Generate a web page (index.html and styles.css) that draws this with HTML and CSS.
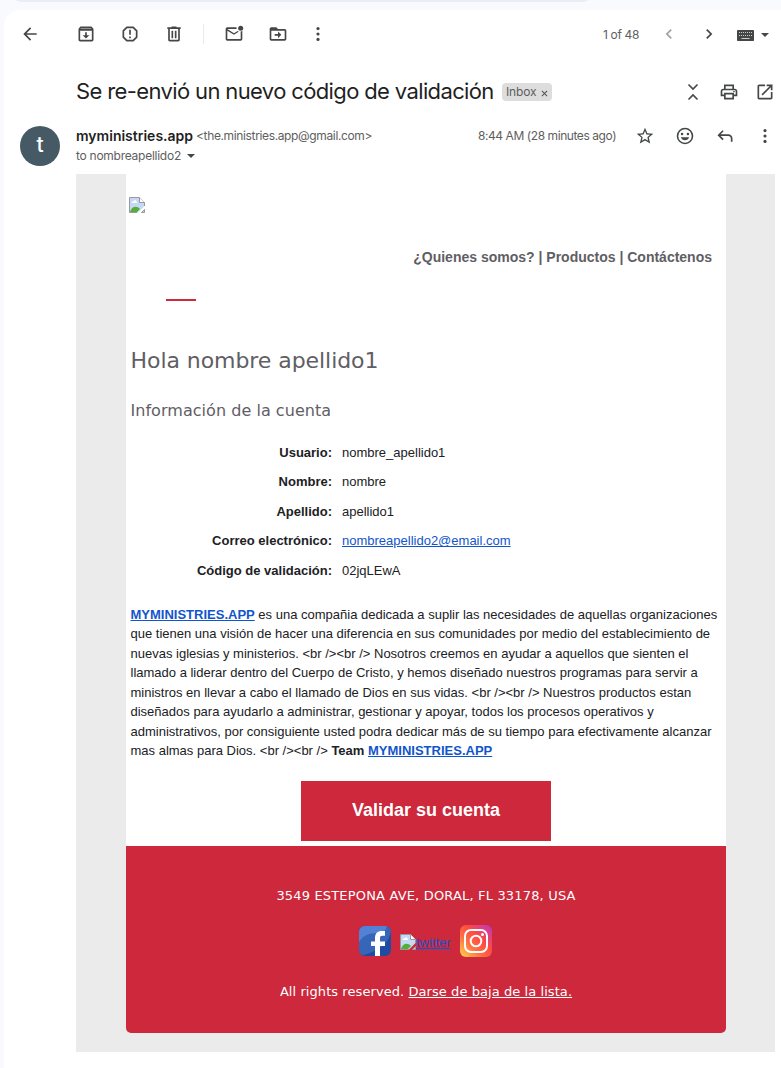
FILE: index.html
```
<!DOCTYPE html>
<html lang="es">
<head>
<meta charset="utf-8">
<title>Se re-envió un nuevo código de validación</title>
<link rel="stylesheet" href="styles.css">
</head>
<body>
<svg width="0" height="0" class="defs">
  <defs>
    <symbol id="more" viewBox="0 0 24 24"><circle cx="12" cy="5.5" r="1.9"/><circle cx="12" cy="12" r="1.9"/><circle cx="12" cy="18.5" r="1.9"/></symbol>
    <symbol id="broken" viewBox="0 0 16 16">
      <path d="M.5.5h10l5 5V9L9 15.500H.5z" fill="#c6d8f5"/>
      <path d="M1 15c1.500-5.500 6.500-7 10-3l-3 3z" fill="#54ae3a"/>
      <path d="M15.500 9V5.500l-5-5H.5v15H8" fill="none" stroke="#999"/>
      <path d="M10.500.5v5h5" fill="#fff" stroke="#999"/>
      <path d="M3 6c-.9-1.600 1-2.300 1.500-1.500C5 2.600 7.500 3 7.300 4.600 8.400 4.700 8.300 6 7.500 6z" fill="#fff"/>
      <path d="M12.500 15.500L15.500 12.500v3z" fill="#c6d8f5" stroke="#999"/>
    </symbol>
  </defs>
</svg>
<div class="search"></div>
<main class="card">
  <div class="toolbar">
    <svg class="ic" viewBox="0 0 24 24"><path d="M20 11H7.800l5.600-5.600L12 4l-8 8 8 8 1.400-1.400L7.800 13H20z"/></svg>
    <svg class="ic g36" viewBox="0 0 24 24"><path d="M20.500 5.200l-1.400-1.700C18.900 3.200 18.500 3 18 3H6c-.5 0-.9.2-1.200.5L3.500 5.200C3.200 5.600 3 6 3 6.500V19c0 1.100.9 2 2 2h14c1.100 0 2-.9 2-2V6.500c0-.5-.2-.9-.5-1.300zM19 19H5V8h14z"/><path d="M6 5h12l.8 1H5.200z" fill="#aaa"/><path d="M11 10h2v3.500h3L12 17.500 8 13.500h3z"/></svg>
    <svg class="ic g24" viewBox="0 0 24 24"><path d="M11 15h2v2h-2zm0-8h2v6h-2z"/><path d="M8.200 4h7.600L20 8.200v7.600L15.800 20H8.200L4 15.800V8.200z" fill="none" stroke="#444746" stroke-width="2" stroke-linejoin="round"/></svg>
    <svg class="ic g24" viewBox="0 0 24 24"><path d="M15 4V3H9v1H4v2h1v13c0 1.100.9 2 2 2h10c1.100 0 2-.9 2-2V6h1V4zm2 15H7V6h10zM9 8h2v9H9zm4 0h2v9h-2z"/></svg>
    <span class="divider"></span>
    <svg class="ic" viewBox="0 0 24 24"><path d="M22 9v9c0 1.100-.9 2-2 2H4c-1.100 0-2-.9-2-2V6c0-1.100.9-2 2-2h11.100a5 5 0 0 0 0 2H4l8 5 4.400-2.700c.5.400 1 .6 1.700.8L12 13 4 8v10h16V9c.8-.2 1.400-.5 2-1z"/><circle cx="20" cy="5" r="3"/></svg>
    <svg class="ic g24" viewBox="0 0 24 24"><path d="M20 6h-8l-2-2H4c-1.100 0-2 .9-2 2v12c0 1.100.9 2 2 2h16c1.100 0 2-.9 2-2V8c0-1.100-.9-2-2-2zm0 12H4V8h16zm-8-1l4-4-4-4v3H8v2h4z"/></svg>
    <svg class="ic g20"><use href="#more"/></svg>
    <span class="count">1 of 48</span>
    <svg class="ic prev" viewBox="0 0 24 24"><path d="M15.400 7.400L14 6l-6 6 6 6 1.400-1.400L10.800 12z"/></svg>
    <svg class="ic next" viewBox="0 0 24 24"><path d="M8.600 7.400L10 6l6 6-6 6-1.400-1.400 4.600-4.600z"/></svg>
    <svg class="keyboard" viewBox="0 0 17 11"><rect width="17" height="11" rx=".7" fill="#444746"/><path d="M2 2.500h13M2 5.500h13" stroke="#ccc" stroke-dasharray="1 1"/><path d="M4.500 8.500h8" stroke="#ccc"/></svg>
    <svg class="caret" viewBox="0 0 8 4"><path d="M0 0h8L4 4z"/></svg>
  </div>

  <header class="subject">
    <h1>Se re-envió un nuevo código de validación</h1>
    <span class="label"><span class="inbox">Inbox</span><svg viewBox="0 0 8 8"><path d="M1 1l6 6M7 1L1 7" stroke="#555" stroke-width="1.200"/></svg></span>
    <svg class="ic collapse" viewBox="0 0 20 20"><path d="M5.500 2.500L10 7l4.500-4.500M5.500 17.500L10 13l4.500 4.500" fill="none" stroke="#444746" stroke-width="1.600"/></svg>
    <svg class="ic print" viewBox="0 0 24 24"><path d="M19 8h-1V3H6v5H5c-1.700 0-3 1.300-3 3v6h4v4h12v-4h4v-6c0-1.700-1.300-3-3-3zM8 5h8v3H8zm8 14H8v-4h8zm2-4v-2H6v2H4v-4c0-.6.400-1 1-1h14c.6 0 1 .4 1 1v4z"/><circle cx="18" cy="11.500" r="1"/></svg>
    <svg class="ic open" viewBox="0 0 24 24"><path d="M19 19H5V5h7V3H5c-1.100 0-2 .9-2 2v14c0 1.100.9 2 2 2h14c1.100 0 2-.9 2-2v-7h-2zM14 3v2h3.600l-9.800 9.800 1.400 1.400L19 6.400V10h2V3z"/></svg>
  </header>

  <section class="sender">
    <div class="avatar">t</div>
    <div class="who">
      <div class="from"><b>myministries.app</b><span class="email">&lt;the.ministries.app@gmail.com&gt;</span></div>
      <div class="to"><span>to nombreapellido2</span><svg class="caret" viewBox="0 0 8 4"><path d="M0 0h8L4 4z"/></svg></div>
    </div>
    <div class="meta">
      <span class="time">8:44 AM (28 minutes ago)</span>
      <svg class="ic star" viewBox="0 0 24 24"><path d="M22 9.200l-7.200-.6L12 2 9.200 8.600 2 9.200l5.500 4.700L5.800 21l6.200-3.700 6.200 3.700-1.600-7.100zm-10 6.200l-3.800 2.300 1-4.300-3.300-2.900 4.400-.4L12 6.100l1.700 4 4.400.4-3.300 2.900 1 4.300z"/></svg>
      <svg class="ic smile" viewBox="0 0 24 24"><circle cx="12" cy="12" r="9" fill="none" stroke="#444746" stroke-width="1.900"/><circle cx="8.500" cy="9.500" r="1.500"/><circle cx="15.500" cy="9.500" r="1.500"/><path d="M7 13.500h10c-.8 2.300-2.600 3.700-5 3.700s-4.200-1.400-5-3.700z"/></svg>
      <svg class="ic reply" viewBox="0 0 24 24"><path d="M9 5l1.400 1.400L6.800 10H16c2.800 0 5 2.200 5 5v4h-2v-4c0-1.700-1.300-3-3-3H6.800l3.600 3.600L9 17l-6-6z"/></svg>
      <svg class="ic dots"><use href="#more"/></svg>
    </div>
  </section>

  <div class="message">
    <article class="mail">
      <svg class="logo"><use href="#broken"/></svg>
      <nav class="links"><span>¿Quienes somos? | Productos | Contáctenos</span></nav>
      <hr class="dash">
      <h2><span>Hola nombre apellido1</span></h2>
      <h3><span>Información de la cuenta</span></h3>
      <dl>
        <dt>Usuario:</dt><dd>nombre_apellido1</dd>
        <dt>Nombre:</dt><dd>nombre</dd>
        <dt>Apellido:</dt><dd>apellido1</dd>
        <dt>Correo electrónico:</dt><dd><a href="#">nombreapellido2@email.com</a></dd>
        <dt>Código de validación:</dt><dd>02jqLEwA</dd>
      </dl>
      <p class="about"><a href="#"><b>MYMINISTRIES.APP</b></a> es una compañia dedicada a suplir las necesidades de aquellas organizaciones<br>
        que tienen una visión de hacer una diferencia en sus comunidades por medio del establecimiento de<br>
        nuevas iglesias y ministerios. &lt;br /&gt;&lt;br /&gt; Nosotros creemos en ayudar a aquellos que sienten el<br>
        llamado a liderar dentro del Cuerpo de Cristo, y hemos diseñado nuestros programas para servir a<br>
        ministros en llevar a cabo el llamado de Dios en sus vidas. &lt;br /&gt;&lt;br /&gt; Nuestros productos estan<br>
        diseñados para ayudarlo a administrar, gestionar y apoyar, todos los procesos operativos y<br>
        administrativos, por consiguiente usted podra dedicar más de su tiempo para efectivamente alcanzar<br>
        mas almas para Dios. &lt;br /&gt;&lt;br /&gt; <b>Team <a href="#">MYMINISTRIES.APP</a></b></p>
      <a class="button" href="#">Validar su cuenta</a>
      <footer>
        <div class="address">3549 ESTEPONA AVE, DORAL, FL 33178, USA</div>
        <div class="social">
          <svg class="fb" viewBox="0 0 32 30">
            <defs><clipPath id="fbclip"><rect width="32" height="30" rx="6"/></clipPath></defs>
            <g clip-path="url(#fbclip)"><rect width="32" height="30" fill="#1f4ba0"/><path d="M0 0h32v4C31 16 20 26 0 30z" fill="#3766b8"/><path d="M0 0h28C27 5 23 7 18 7 9 7 4 10 0 16z" fill="#5282d6"/>
            <path d="M16 30V20h-4v-4.500h4V12c0-4.500 2.500-7 7-7h3v4.700h-2.500c-2 0-2.500.8-2.500 2.500v3.300h5V20h-5v10z" fill="#fff"/></g>
          </svg>
          <a class="twitter" href="#"><svg><use href="#broken"/></svg><span>twitter</span></a>
          <svg class="ig" viewBox="0 0 32 32">
            <defs><linearGradient id="iggrad" x1="0" y1="1" x2="1" y2="0"><stop offset="0" stop-color="#ffd84c"/><stop offset=".35" stop-color="#ff7043"/><stop offset=".6" stop-color="#ff4a42"/><stop offset="1" stop-color="#b936c4"/></linearGradient></defs>
            <rect width="32" height="32" rx="6" fill="url(#iggrad)"/>
            <g fill="none" stroke="#fff" stroke-width="2"><rect x="5" y="5" width="22" height="22" rx="6"/><circle cx="16" cy="16" r="5.300"/></g><circle cx="22.500" cy="9.500" r="1.500" fill="#fff"/>
          </svg>
        </div>
        <div class="rights">All rights reserved. <a href="#">Darse de baja de la lista.</a></div>
      </footer>
    </article>
  </div>
</main>
</body>
</html>
```
FILE: styles.css
```
* { box-sizing: border-box; }
body { margin: 0; background: #f8fafd; font-family: "Liberation Sans", Arial, sans-serif; color: #202124; width: 781px; height: 1068px; overflow: hidden; }
svg { display: block; flex: none; }
.defs { position: absolute; }
.search { width: 572px; height: 2px; margin-left: 16px; background: #e9eef6; border-radius: 0 0 10px 10px / 0 0 2px 2px; }
.card { margin: 8px 0 0 4px; height: 1058px; background: #fff; border-radius: 16px 0 0 0; }
.ic { width: 20px; height: 20px; fill: #444746; }
.caret { width: 8px; height: 4px; fill: #444746; }
.toolbar { display: flex; align-items: center; height: 48px; padding-left: 16px; }
.g36 { margin-left: 36px; }
.g24 { margin-left: 24px; }
.g20 { margin-left: 20px; }
.divider { width: 1px; height: 20px; background: #e8eaed; margin: 0 20px 0 19px; }
.count { width: 40px; margin: 2px 0 0 275px; font: 12px/18px Inter, sans-serif; letter-spacing: -.35px; color: #5e5e5e; white-space: nowrap; }
.prev { margin-left: 16px; opacity: .5; }
.next { margin-left: 20px; }
.keyboard { width: 17px; height: 11px; margin: 2px 0 0 18px; }
.toolbar .caret { margin-left: 7px; margin-top: 1px; }

.subject { display: flex; align-items: center; height: 36px; margin-top: 16px; padding-left: 72px; }
h1 { width: 426px; margin: -2px 0 0; font: 400 22px/28px Inter, sans-serif; letter-spacing: -.63px; color: #1f1f1f; white-space: nowrap; }
.label { display: flex; align-items: center; width: 50px; height: 18px; padding-left: 4px; border-radius: 4px; background: #ddd; font: 12px/18px Inter, sans-serif; letter-spacing: -.15px; color: #5e5e5e; }
.inbox { width: 35px; }
.label svg { width: 7px; height: 7px; margin-top: 2px; }
.collapse { margin-left: 131px; }
.print { margin-left: 16px; }
.open { margin-left: 16px; }

.sender { display: flex; height: 64px; padding-left: 16px; }
.avatar { width: 40px; height: 40px; margin-top: 16px; border-radius: 50%; background: #455a64; color: #fff; font: 500 21px/38px Inter, sans-serif; text-align: center; }
.who { width: 330px; padding: 16px 0 0 16px; font: 12px/20px Inter, sans-serif; color: #5e5e5e; white-space: nowrap; }
.from { display: flex; }
.from b { width: 120px; font-size: 14px; font-weight: 600; letter-spacing: 0; color: #1f1f1f; }
.email { letter-spacing: -.36px; }
.to { display: flex; align-items: center; }
.to span { width: 111px; letter-spacing: -.26px; }
.meta { display: flex; align-items: center; height: 20px; margin: 16px 0 0 72px; font: 12px/20px Inter, sans-serif; color: #5e5e5e; white-space: nowrap; }
.time { width: 157px; margin-left: 16px; letter-spacing: -.43px; }
.smile, .reply, .dots { margin-left: 20px; }

.message { width: 699px; height: 878px; margin-left: 72px; padding-left: 50px; background: #ebebeb; }
.mail { display: flex; flex-direction: column; width: 600px; height: 859px; background: #fff; border-radius: 0 0 5px 5px; }
.logo { width: 16px; height: 16px; margin: 23px 0 0 3px; }
.links { margin: 34px 14px 0 0; text-align: right; font-size: 14px; line-height: 20px; font-weight: bold; color: #5f5e64; }
.dash { width: 30px; height: 2px; margin: 32px 0 0 40px; border: 0; background: #cd283b; }
h2, h3 { margin: 0 0 0 4.5px; font-family: "DejaVu Sans", Verdana, sans-serif; font-weight: 400; color: #5f5e64; white-space: nowrap; }
h2 { margin-top: 45px; font-size: 22px; line-height: 30px; letter-spacing: -.06px; }
h3 { margin-top: 23px; font-size: 16px; line-height: 24px; letter-spacing: .04px; }
dl { display: grid; grid-template-columns: 206px 1fr; column-gap: 10px; grid-auto-rows: 29.45px; margin: 15px 0 0; font-size: 13px; line-height: 29px; }
dt { text-align: right; font-weight: bold; }
dd { margin: 0; }
a { color: #1155cc; }
.about { margin: 19.500px 0 0 4.500px; font-size: 13px; line-height: 19.5px; white-space: nowrap; }
.button { width: 250px; height: 60px; margin: 20.250px auto 0 175px; background: #cd283b; color: #fff; font-size: 18px; line-height: 58px; font-weight: bold; text-align: center; text-decoration: none; }
footer { flex: 1; margin-top: 5px; padding-top: 40px; background: #cd283b; border-radius: 0 0 5px 5px; font: 13px/20px "DejaVu Sans", Verdana, sans-serif; color: #fff; text-align: center; }
.address { letter-spacing: .17px; }
.social { display: flex; align-items: center; height: 32px; margin: 19px 0 0 233px; }
.fb { width: 32px; height: 30px; }
.twitter { display: flex; width: 60px; margin: 4px 0 0 9px; font: 13px/16px "Liberation Sans", Arial, sans-serif; }
.twitter svg { width: 16px; height: 16px; }
.twitter span { padding-top: 1px; }
.ig { width: 32px; height: 32px; }
.rights { margin-top: 25px; letter-spacing: .07px; }
.rights a { color: #fff; }
```
